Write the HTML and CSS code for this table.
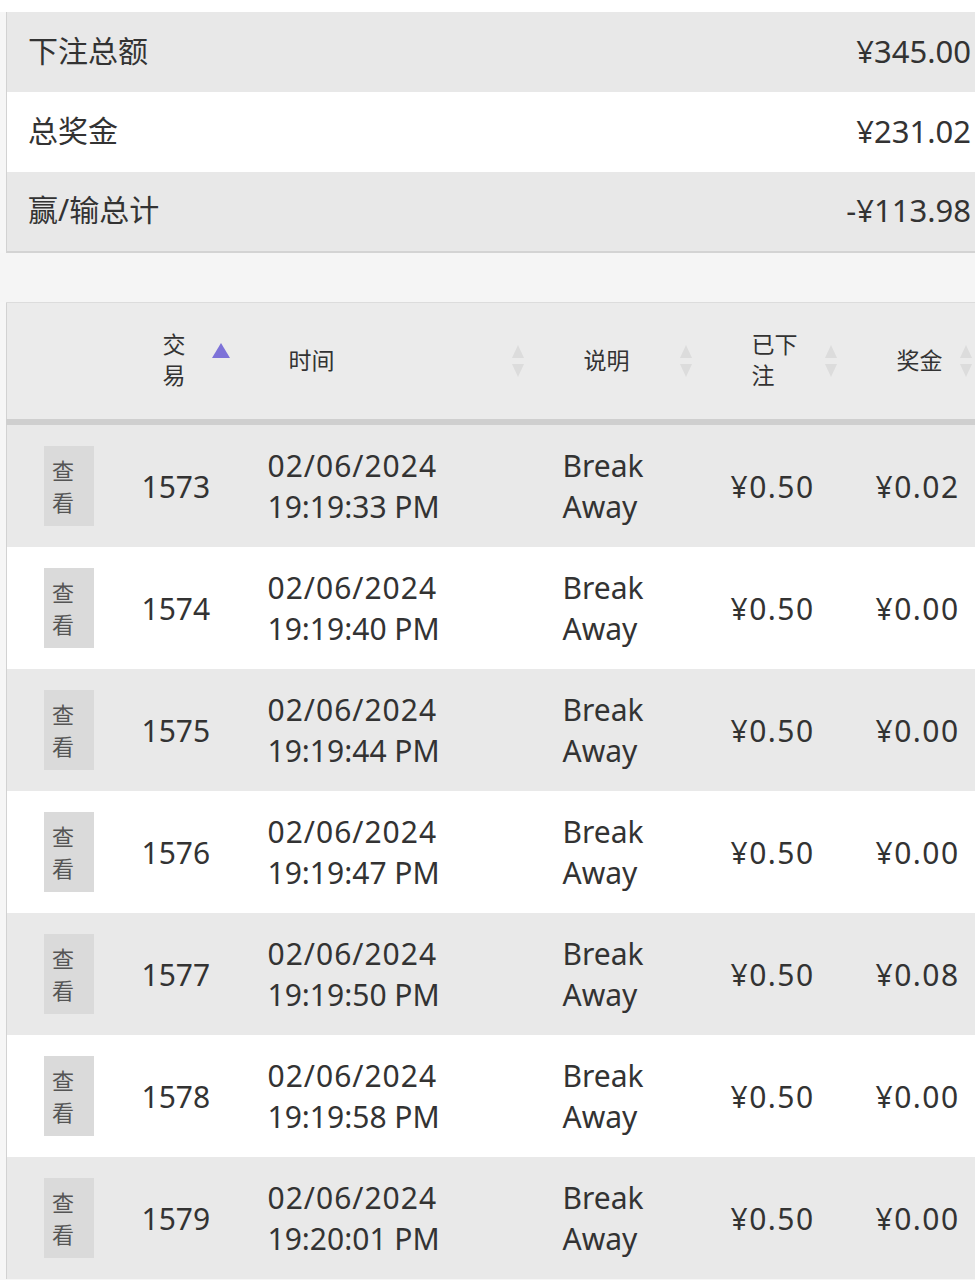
FILE: index.html
```html
<!DOCTYPE html>
<html lang="zh-CN">
<head>
<meta charset="utf-8">
<title>投注记录</title>
<link rel="stylesheet" href="styles.css">
</head>
<body>
<div class="page">
  <div class="top-strip"></div>
  <table class="summary">
    <tbody>
      <tr class="alt"><td class="label">下注总额</td><td class="value">¥345.00</td></tr>
      <tr><td class="label">总奖金</td><td class="value">¥231.02</td></tr>
      <tr class="alt"><td class="label">赢/输总计</td><td class="value">-¥113.98</td></tr>
    </tbody>
  </table>
  <div class="gap"></div>
  <table class="records">
    <colgroup>
      <col class="c-btn"><col class="c-id"><col class="c-time"><col class="c-desc"><col class="c-bet"><col class="c-win">
    </colgroup>
    <thead>
      <tr>
        <th></th>
        <th><div class="th-in"><span class="th-label narrow">交易</span><svg class="sort active" viewBox="0 0 20 18"><polygon points="10,1 19,16 1,16"/></svg></div></th>
        <th><div class="th-in"><span class="th-label">时间</span><svg class="sort" viewBox="0 0 16 40"><polygon points="8,4 14,17 2,17"/><polygon points="8,36 14,23 2,23"/></svg></div></th>
        <th><div class="th-in"><span class="th-label">说明</span><svg class="sort" viewBox="0 0 16 40"><polygon points="8,4 14,17 2,17"/><polygon points="8,36 14,23 2,23"/></svg></div></th>
        <th><div class="th-in"><span class="th-label mid">已下注</span><svg class="sort" viewBox="0 0 16 40"><polygon points="8,4 14,17 2,17"/><polygon points="8,36 14,23 2,23"/></svg></div></th>
        <th><div class="th-in"><span class="th-label">奖金</span><svg class="sort" viewBox="0 0 16 40"><polygon points="8,4 14,17 2,17"/><polygon points="8,36 14,23 2,23"/></svg></div></th>
      </tr>
    </thead>
    <tbody>
      <tr class="alt"><td><span class="view-btn">查看</span></td><td>1573</td><td><span class="date">02/06/2024</span><br>19:19:33 PM</td><td>Break<br>Away</td><td class="amt">¥0.50</td><td class="amt">¥0.02</td></tr>
      <tr><td><span class="view-btn">查看</span></td><td>1574</td><td><span class="date">02/06/2024</span><br>19:19:40 PM</td><td>Break<br>Away</td><td class="amt">¥0.50</td><td class="amt">¥0.00</td></tr>
      <tr class="alt"><td><span class="view-btn">查看</span></td><td>1575</td><td><span class="date">02/06/2024</span><br>19:19:44 PM</td><td>Break<br>Away</td><td class="amt">¥0.50</td><td class="amt">¥0.00</td></tr>
      <tr><td><span class="view-btn">查看</span></td><td>1576</td><td><span class="date">02/06/2024</span><br>19:19:47 PM</td><td>Break<br>Away</td><td class="amt">¥0.50</td><td class="amt">¥0.00</td></tr>
      <tr class="alt"><td><span class="view-btn">查看</span></td><td>1577</td><td><span class="date">02/06/2024</span><br>19:19:50 PM</td><td>Break<br>Away</td><td class="amt">¥0.50</td><td class="amt">¥0.08</td></tr>
      <tr><td><span class="view-btn">查看</span></td><td>1578</td><td><span class="date">02/06/2024</span><br>19:19:58 PM</td><td>Break<br>Away</td><td class="amt">¥0.50</td><td class="amt">¥0.00</td></tr>
      <tr class="alt"><td><span class="view-btn">查看</span></td><td>1579</td><td><span class="date">02/06/2024</span><br>19:20:01 PM</td><td>Break<br>Away</td><td class="amt">¥0.50</td><td class="amt">¥0.00</td></tr>
    </tbody>
  </table>
</div>
</body>
</html>
```
FILE: styles.css
```css
html, body {
  margin: 0;
  padding: 0;
  overflow: hidden;
  background: #f6f6f6;
}
body {
  font-family: "Noto Sans", "Noto Sans CJK SC", sans-serif;
  color: #333;
}
.page {
  width: 975px;
  overflow: hidden;
}
.top-strip {
  height: 12px;
  background: #fff;
}
.summary {
  margin-left: 6px;
  width: 984px;
  border-collapse: collapse;
  border-left: 1px solid #d2d2d2;
  border-bottom: 2px solid #d3d3d3;
  background: #fff;
}
.summary td {
  box-sizing: border-box;
  height: 80px;
  padding: 0 0 3px 0;
  font-size: 30px;
  line-height: 40px;
  color: #333;
}
.summary .label {
  padding-left: 21px;
}
.summary .value {
  text-align: right;
  padding-right: 19px;
  font-size: 31px;
}
.summary tr.alt td {
  background: #e8e8e8;
}
.gap {
  height: 49px;
  background: #f5f5f5;
}
.records {
  margin-left: 6px;
  width: 984px;
  border-collapse: collapse;
  table-layout: fixed;
  border-left: 1px solid #d2d2d2;
  border-top: 1px solid #dcdcdc;
}
.c-btn { width: 115px; }
.c-id { width: 126px; }
.c-time { width: 295px; }
.c-desc { width: 168px; }
.c-bet { width: 145px; }
.c-win { width: 135px; }
.records thead th {
  height: 116px;
  padding: 0;
  background: #ebebeb;
  border-bottom: 6px solid #cfcfcf;
  font-weight: normal;
  text-align: left;
  font-size: 23px;
  color: #333;
}
.th-in {
  display: flex;
  align-items: center;
  justify-content: space-between;
  padding-left: 41px;
  padding-right: 17px;
}
.th-label {
  line-height: 31px;
  margin-top: -2px;
}
.th-label.narrow {
  width: 24px;
}
.th-label.mid {
  width: 48px;
}
.sort {
  width: 16px;
  height: 40px;
  fill: #dcdcdc;
}
.sort.active {
  width: 20px;
  height: 18px;
  fill: #7d72d8;
  margin-bottom: 20px;
}
.records tbody td {
  height: 122px;
  padding: 0 0 0 20px;
  background: #fff;
  font-size: 30px;
  line-height: 41px;
  color: #333;
  white-space: nowrap;
}
.records tbody tr.alt td {
  background: #e9e9e9;
}
.records tbody td:first-child {
  padding-left: 37px;
}
.date {
  letter-spacing: 1px;
}
.amt {
  letter-spacing: 1.5px;
}
.view-btn {
  display: block;
  box-sizing: border-box;
  width: 50px;
  height: 80px;
  padding: 8px 0 0 8px;
  background: #dadada;
  font-size: 22px;
  line-height: 32px;
  color: #555;
  white-space: normal;
  word-break: break-all;
}
```
